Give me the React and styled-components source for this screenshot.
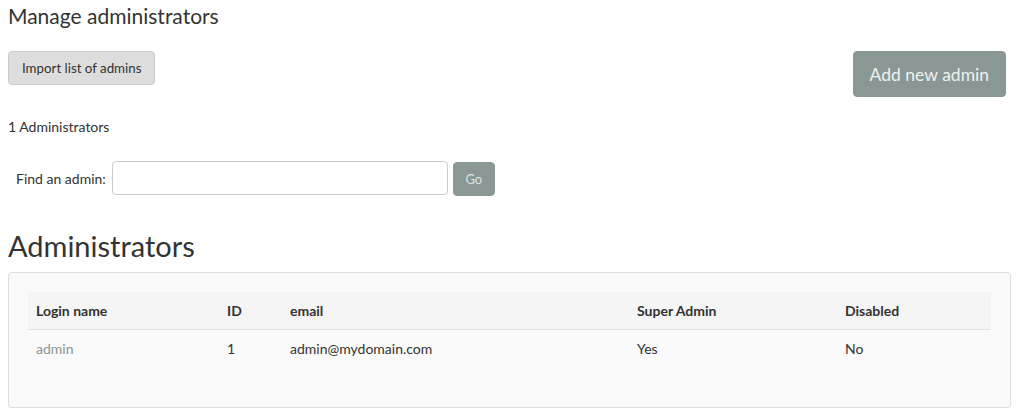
import styled, { createGlobalStyle } from "styled-components";

const GlobalStyle = createGlobalStyle`
  body {
    margin: 0;
    font-family: "Source Sans Pro", Lato, "Liberation Sans", sans-serif;
    color: #333;
    background: #fff;
  }
`;

const admins = [
  { login: "admin", id: 1, email: "admin@mydomain.com", superAdmin: "Yes", disabled: "No" },
];

const Page = styled.div`
  padding: 0 6px 0 8px;
`;

const Title = styled.h1`
  font-size: 21px;
  font-weight: 400;
  line-height: 24px;
  margin: 4px 0 0;
`;

const Toolbar = styled.div`
  display: flex;
  justify-content: space-between;
  align-items: flex-start;
  margin-top: 23px;
  padding-right: 5px;
`;

const Button = styled.button`
  font-family: inherit;
  border-radius: 4px;
  cursor: pointer;
  border: 1px solid ${(p) => (p.$primary ? "#899795" : "#ccc")};
  background: ${(p) => (p.$primary ? "#899795" : "#ddd")};
  color: ${(p) => (p.$primary ? "#eef1f0" : "#333")};
  font-size: ${(p) => (p.$large ? "17.5px" : "13.3px")};
  height: ${(p) => (p.$large ? "46px" : "34px")};
  padding: ${(p) => (p.$large ? "0 16px" : "0 13px")};
  min-width: ${(p) => (p.$large ? "151px" : "0")};
`;

const Count = styled.div`
  font-size: 14px;
  line-height: 20px;
  margin-top: 20px;
`;

const SearchRow = styled.form`
  display: flex;
  align-items: center;
  gap: 5px;
  margin-top: 23px;
  padding-left: 8px;
`;

const Label = styled.label`
  font-size: 14px;
  margin-right: 1px;
`;

const Input = styled.input`
  width: 336px;
  height: 34px;
  box-sizing: border-box;
  border: 1px solid #ccc;
  border-radius: 4px;
  font-family: inherit;
  font-size: 14px;
  padding: 0 8px;
`;

const GoButton = styled(Button)`
  width: 42px;
  padding: 0;
  margin-top: 2px;
  font-size: 13px;
  color: #dde3e2;
`;

const Subtitle = styled.h2`
  font-size: 29px;
  font-weight: 400;
  line-height: 34px;
  margin: 33px 0 0;
`;

const Panel = styled.div`
  margin-top: 9px;
  background: #fafafa;
  border: 1px solid #ddd;
  border-radius: 4px;
  box-shadow: 0 1px 1px rgba(0, 0, 0, 0.05);
  padding: 19px 19px 39px;
`;

const Table = styled.table`
  width: 100%;
  table-layout: fixed;
  border-collapse: collapse;
  font-size: 14px;
`;

const Th = styled.th`
  box-sizing: border-box;
  text-align: left;
  font-weight: 700;
  background: #f5f5f5;
  height: 37px;
  padding: 0 8px;
  border-bottom: 1px solid #e2e2e2;
  width: ${(p) => p.$w || "auto"};
`;

const Td = styled.td`
  height: 38px;
  padding: 0 8px;
  color: ${(p) => (p.$muted ? "#8a9391" : "#333")};
`;

export default function App() {
  return (
    <Page>
      <GlobalStyle />
      <Title>Manage administrators</Title>
      <Toolbar>
        <Button>Import list of admins</Button>
        <Button $primary $large>
          Add new admin
        </Button>
      </Toolbar>
      <Count>1 Administrators</Count>
      <SearchRow onSubmit={(e) => e.preventDefault()}>
        <Label htmlFor="find">Find an admin:</Label>
        <Input id="find" type="text" />
        <GoButton $primary>Go</GoButton>
      </SearchRow>
      <Subtitle>Administrators</Subtitle>
      <Panel>
        <Table>
          <thead>
            <tr>
              <Th $w="191px">Login name</Th>
              <Th $w="63px">ID</Th>
              <Th $w="347px">email</Th>
              <Th $w="208px">Super Admin</Th>
              <Th>Disabled</Th>
            </tr>
          </thead>
          <tbody>
            {admins.map((a) => (
              <tr key={a.id}>
                <Td $muted>{a.login}</Td>
                <Td>{a.id}</Td>
                <Td>{a.email}</Td>
                <Td>{a.superAdmin}</Td>
                <Td>{a.disabled}</Td>
              </tr>
            ))}
          </tbody>
        </Table>
      </Panel>
    </Page>
  );
}
